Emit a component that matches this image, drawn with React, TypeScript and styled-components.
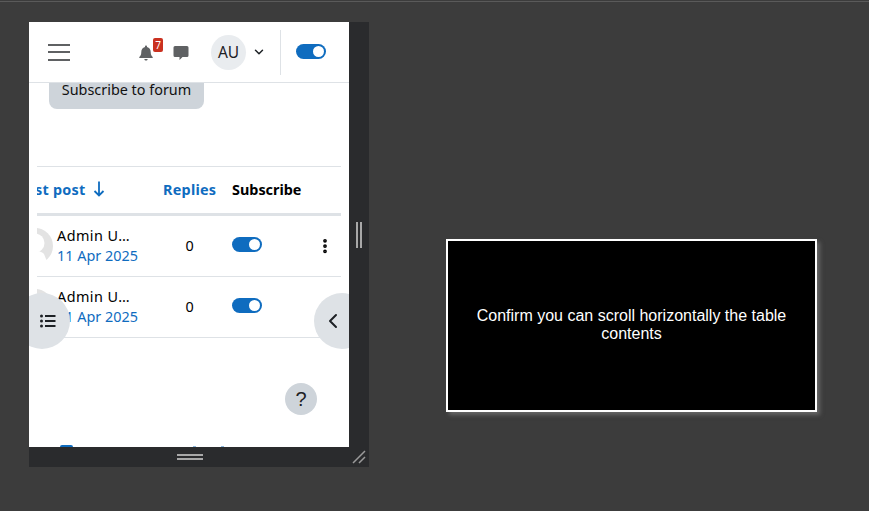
import { createGlobalStyle, styled } from 'styled-components'
import { ChevronDown, ChevronLeft, EllipsisVertical } from 'lucide-react'

const GlobalStyle = createGlobalStyle`
  html, body {
    margin: 0;
    height: 100%;
    background: #3c3c3c;
  }
  * {
    box-sizing: border-box;
  }
`

const Page = styled.div`
  width: 869px;
  height: 511px;
  overflow: hidden;
  padding: 22px 0 0 29px;
  display: flex;
  align-items: flex-start;
  gap: 77px;
  background: linear-gradient(#3c3c3c 1px, #5a5a5a 1px, #5a5a5a 2px, #3c3c3c 2px);
`

const Resizer = styled.div`
  width: 340px;
  height: 445px;
  display: grid;
  grid-template-columns: 320px 20px;
  grid-template-rows: 425px 20px;
  background: #2a2b2d;
`

const Frame = styled.div`
  position: relative;
  overflow: hidden;
  background: #fff;
  display: flex;
  flex-direction: column;
  font-family: "Noto Sans", sans-serif;
  color: #1d2125;
`

const Navbar = styled.header`
  height: 61px;
  flex: none;
  display: flex;
  align-items: center;
  padding: 0 23px 0 19px;
  border-bottom: 1px solid #dee2e6;
  background: #fff;
`

const Burger = styled.div`
  width: 22px;
  height: 17px;
  display: flex;
  flex-direction: column;
  justify-content: space-between;
  margin-right: 68px;
  span {
    display: block;
    height: 2px;
    background: #5f6163;
  }
`

const IconSlot = styled.div`
  position: relative;
  width: 16px;
  height: 16px;
  margin-top: 1px;
  display: flex;
`

const Badge = styled.span`
  position: absolute;
  left: 15px;
  top: -7px;
  width: 10px;
  height: 14px;
  border-radius: 2px;
  background: #ca3120;
  color: #fff;
  font-size: 10px;
  line-height: 14px;
  text-align: center;
`

const ChatSlot = styled(IconSlot)`
  margin-left: 19px;
`

const UserCircle = styled.div`
  width: 35px;
  height: 35px;
  margin-left: 22px;
  border-radius: 50%;
  background: #e9ecef;
  font-size: 15.5px;
  line-height: 35px;
  text-align: center;
  color: #1d2125;
`

const Caret = styled(ChevronDown)`
  width: 14px;
  height: 14px;
  margin-left: 6px;
  color: #1d2125;
`

const Divider = styled.div`
  width: 1px;
  height: 45px;
  margin: 0 15px 0 14px;
  background: #dee2e6;
`

const ToggleTrack = styled.span<{ $lift: number }>`
  width: 30px;
  height: 15px;
  flex: none;
  margin-top: -${p => p.$lift}px;
  border-radius: 8px;
  background: #0f6cbf;
  display: flex;
  align-items: center;
  justify-content: flex-end;
  padding-right: 2px;
  &::after {
    content: '';
    width: 11px;
    height: 11px;
    border-radius: 50%;
    background: #fff;
  }
`

const Main = styled.main`
  flex: 1;
  min-height: 0;
  overflow: hidden;
  display: flex;
  flex-direction: column;
`

const SubscribeButton = styled.button`
  align-self: flex-start;
  flex: none;
  width: 155px;
  height: 38px;
  margin: -12px 0 0 20px;
  border: 0;
  border-radius: 8px;
  background: #ced4da;
  font: 400 14.4px/38px "Noto Sans", sans-serif;
  color: #111;
  padding: 0;
`

const Table = styled.div`
  flex: none;
  width: 304px;
  margin: 57px 0 0 8px;
  overflow: hidden;
  border-top: 1px solid #dee2e6;
`

const Row = styled.div<{ $head?: boolean }>`
  display: grid;
  grid-template-columns: 126px 69px 1fr 32px;
  align-items: center;
  height: ${p => (p.$head ? '49px' : '61px')};
  padding-bottom: ${p => (p.$head ? '2px' : '0')};
  border-bottom: ${p => (p.$head ? '3px' : '1px')} solid #dee2e6;
`

const HeadCell = styled.div<{ $dark?: boolean }>`
  font-size: 14.4px;
  font-weight: 700;
  letter-spacing: ${p => (p.$dark ? '0' : '0.25px')};
  white-space: nowrap;
  color: ${p => (p.$dark ? '#000' : '#0f6cbf')};
  display: flex;
  align-items: center;
`

const SortCell = styled(HeadCell)`
  margin-left: -2px;
  gap: 7px;
`

const UserCell = styled.div`
  display: flex;
  align-items: center;
  gap: 4px;
  margin-left: -20px;
`

const Avatar = styled.svg`
  width: 36px;
  height: 36px;
  flex: none;
`

const UserText = styled.div`
  font-size: 14.4px;
  line-height: 20px;
  white-space: nowrap;
  color: #000;
`

const UserName = styled.div`
  letter-spacing: 0.45px;
`

const DateLink = styled.div`
  color: #0f6cbf;
`

const Count = styled.div`
  width: 53px;
  margin-top: -2px;
  text-align: center;
  font-size: 14.4px;
  color: #000;
`

const Kebab = styled(EllipsisVertical)`
  width: 18px;
  height: 18px;
  margin-left: 7px;
  color: #000;
  stroke-width: 3;
`

const EdgeButton = styled.div<{ $side: 'left' | 'right' }>`
  position: absolute;
  top: 271px;
  ${p => (p.$side === 'left' ? 'left: -15px;' : 'right: -21px;')}
  width: 56px;
  height: 56px;
  border-radius: 50%;
  background: #dee2e6;
  display: flex;
  align-items: center;
  color: #1d2125;
  ${p => (p.$side === 'left' ? 'padding-left: 26px;' : 'padding-left: 7px;')}
`

const HelpButton = styled.div`
  position: absolute;
  left: 256px;
  top: 361px;
  width: 32px;
  height: 32px;
  border-radius: 50%;
  background: #ced4da;
  color: #1d2125;
  font: 400 20px/32px "Liberation Sans", sans-serif;
  text-align: center;
`

const FooterPeek = styled.div`
  margin-top: auto;
  height: 2px;
  flex: none;
  display: flex;
  align-items: flex-end;
  padding-left: 31px;
`

const PeekBar = styled.span`
  width: 13px;
  height: 2px;
  border-radius: 2px 2px 0 0;
  background: #0f6cbf;
`

const PeekDot = styled.span<{ $gap: number }>`
  width: 3px;
  height: 1px;
  margin-left: ${p => p.$gap}px;
  background: #8db8de;
`

const StripV = styled.div`
  display: flex;
  align-items: center;
  justify-content: center;
  gap: 2px;
`

const GripV = styled.span`
  width: 2px;
  height: 26px;
  background: #a8a8a8;
`

const StripH = styled.div`
  display: flex;
  flex-direction: column;
  align-items: center;
  justify-content: center;
  gap: 2px;
  padding-left: 2px;
`

const GripH = styled.span`
  width: 26px;
  height: 2px;
  background: #a8a8a8;
`

const Corner = styled.div`
  display: flex;
  align-items: center;
  justify-content: center;
`

const Prompt = styled.div`
  width: 371px;
  height: 173px;
  margin-top: 217px;
  padding: 0 24px 2px;
  border: 2px solid #fff;
  background: #000;
  box-shadow: 3px 3px 4px rgba(130, 130, 130, 0.6);
  color: #fff;
  font: 400 16px/18px "Liberation Sans", Arial, sans-serif;
  text-align: center;
  display: flex;
  align-items: center;
  justify-content: center;
`

function Bell() {
  return (
    <svg width="16" height="16" viewBox="0 0 16 16">
      <path
        fill="#5f6163"
        d="M8 0.5c-.6 0-1 .5-1 1v.6C4.600 2.600 3.300 4.600 3.300 7c0 3-1 3.900-2 5v1h13.400v-1c-1-1.100-2-2-2-5 0-2.400-1.300-4.400-3.700-4.900v-.6c0-.5-.4-1-1-1z"
      />
      <path fill="#5f6163" d="M6.400 14h3.200c0 .9-.7 1.600-1.600 1.600S6.400 14.900 6.400 14z" />
    </svg>
  )
}

function Chat() {
  return (
    <svg width="16" height="16" viewBox="0 0 16 16">
      <path
        fill="#5f6163"
        d="M2 1h12a1.500 1.500 0 0 1 1.500 1.500v8A1.500 1.500 0 0 1 14 12H9.500L6.500 15v-3H2A1.500 1.500 0 0 1 .5 10.500v-8A1.500 1.500 0 0 1 2 1z"
      />
    </svg>
  )
}

function SortArrow() {
  return (
    <svg width="12" height="16" viewBox="0 0 12 16">
      <path d="M6 .5v14M1.500 10l4.500 4.500L10.500 10" stroke="#0f6cbf" strokeWidth="1.800" fill="none" />
    </svg>
  )
}

function ListIcon() {
  return (
    <svg width="16" height="14" viewBox="0 0 16 14">
      <circle cx="1.500" cy="2" r="1.500" fill="#1d2125" />
      <circle cx="1.500" cy="7" r="1.500" fill="#1d2125" />
      <circle cx="1.500" cy="12" r="1.500" fill="#1d2125" />
      <path d="M5 2h10.500M5 7h10.500M5 12h10.500" stroke="#1d2125" strokeWidth="2" />
    </svg>
  )
}

function UserPic() {
  return (
    <Avatar viewBox="0 0 36 36">
      <circle cx="18" cy="18" r="18" fill="#e3e3e3" />
      <circle cx="18" cy="15" r="9.500" fill="#fff" />
      <path fill="#fff" d="M2 36c1-9 7-13 16-13 4 0 7 1 9 3l4 10z" />
    </Avatar>
  )
}

const rows = [
  { key: 'a', kebab: true },
  { key: 'b', kebab: false },
]

export default function App() {
  return (
    <>
      <GlobalStyle />
      <Page>
        <Resizer>
          <Frame>
            <Navbar>
              <Burger>
                <span />
                <span />
                <span />
              </Burger>
              <IconSlot>
                <Bell />
                <Badge>7</Badge>
              </IconSlot>
              <ChatSlot>
                <Chat />
              </ChatSlot>
              <UserCircle>AU</UserCircle>
              <Caret strokeWidth={2.5} />
              <Divider />
              <ToggleTrack $lift={2} />
            </Navbar>
            <Main>
              <SubscribeButton>Subscribe to forum</SubscribeButton>
              <Table>
                <Row $head>
                  <SortCell>
                    st post <SortArrow />
                  </SortCell>
                  <HeadCell>Replies</HeadCell>
                  <HeadCell $dark>Subscribe</HeadCell>
                </Row>
                {rows.map(r => (
                  <Row key={r.key}>
                    <UserCell>
                      <UserPic />
                      <UserText>
                        <UserName>Admin U…</UserName>
                        <DateLink>11 Apr 2025</DateLink>
                      </UserText>
                    </UserCell>
                    <Count>0</Count>
                    <ToggleTrack $lift={3} />
                    {r.kebab && <Kebab />}
                  </Row>
                ))}
              </Table>
              <FooterPeek>
                <PeekBar />
                <PeekDot $gap={120} />
                <PeekDot $gap={25} />
              </FooterPeek>
            </Main>
            <EdgeButton $side="left">
              <ListIcon />
            </EdgeButton>
            <EdgeButton $side="right">
              <ChevronLeft size={24} strokeWidth={2} />
            </EdgeButton>
            <HelpButton>?</HelpButton>
          </Frame>
          <StripV>
            <GripV />
            <GripV />
          </StripV>
          <StripH>
            <GripH />
            <GripH />
          </StripH>
          <Corner>
            <svg width="14" height="14" viewBox="0 0 14 14">
              <path d="M1 13L13 1M7 13l6-6" stroke="#9a9a9a" strokeWidth="1.500" fill="none" />
            </svg>
          </Corner>
        </Resizer>
        <Prompt>Confirm you can scroll horizontally the table contents</Prompt>
      </Page>
    </>
  )
}
